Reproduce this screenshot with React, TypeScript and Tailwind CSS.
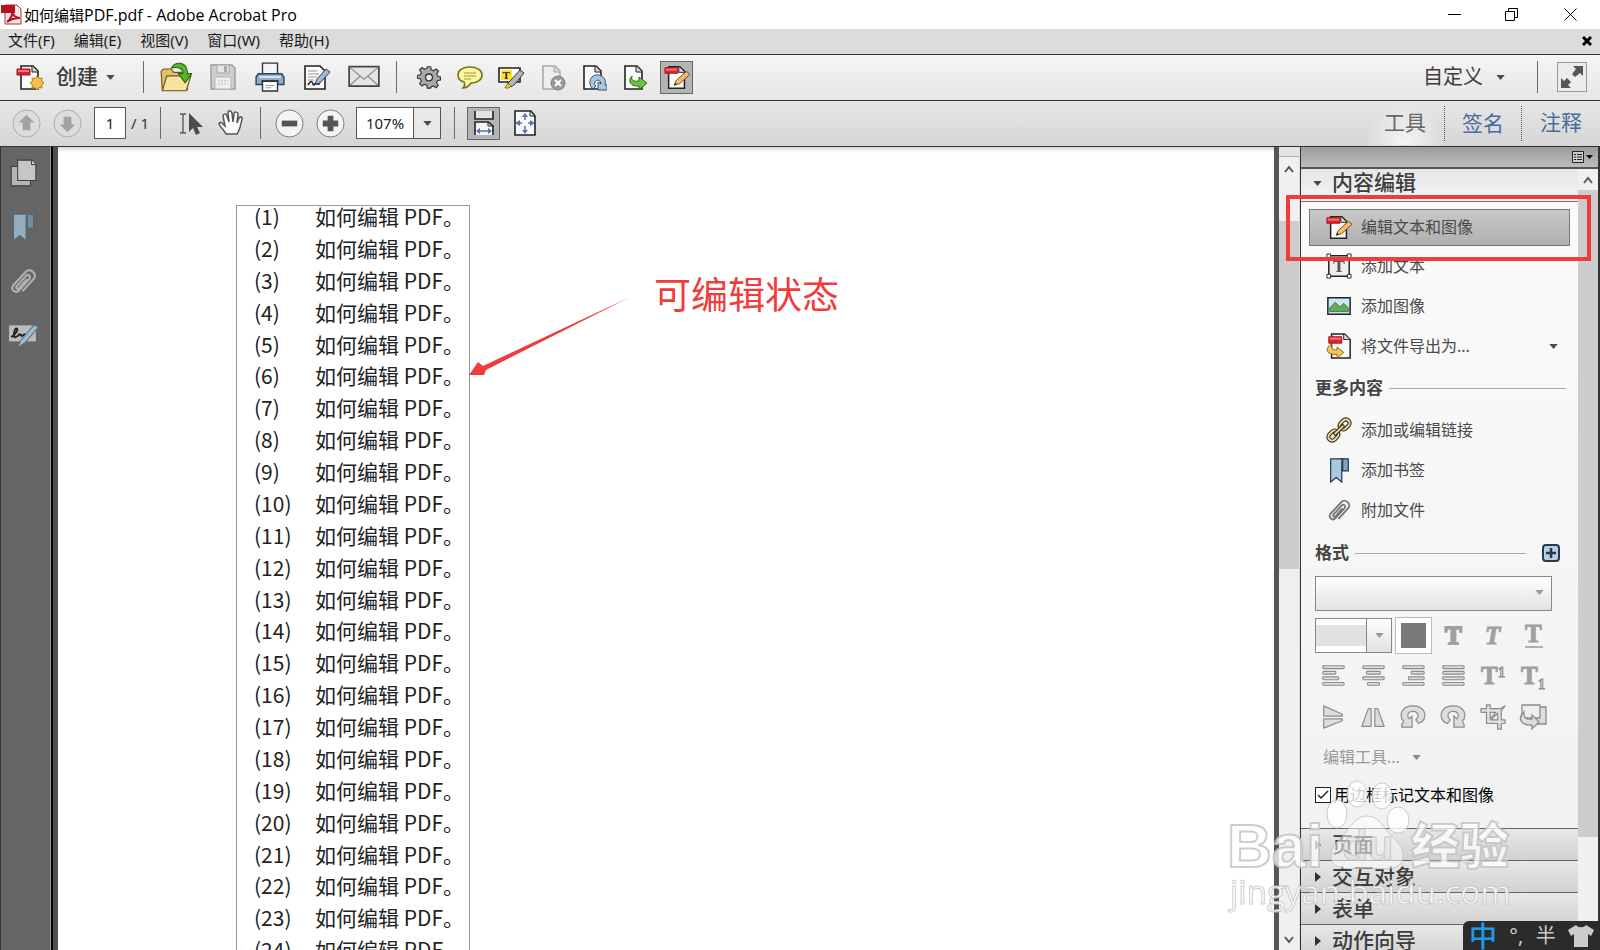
import React from "react";

type IconProps = { size?: number; children: React.ReactNode };

const Icon = ({ size = 28, children }: IconProps) => (
  <svg width={size} height={size} viewBox="0 0 28 28" fill="none" className="shrink-0" aria-hidden="true">
    {children}
  </svg>
);

const Caret = ({ className = "text-[#4a4a4a]" }: { className?: string }) => (
  <svg width="9" height="5" viewBox="0 0 10 6" className={`shrink-0 ${className}`} aria-hidden="true">
    <path d="M0 0h10L5 6z" fill="currentColor" />
  </svg>
);

const Chevron = ({ down = false }: { down?: boolean }) => (
  <svg width="10" height="8" viewBox="0 0 10 8" fill="none" aria-hidden="true">
    <path d={down ? "M1 1l4 5 4-5" : "M1 7l4-5 4 5"} stroke="#555" strokeWidth="2" />
  </svg>
);

const Separator = () => <span className="h-8 w-px shrink-0 bg-[#6b6b6b]" />;

/* ---------- toolbar icons ---------- */

const Page = ({ stroke = "#222", fill = "#fafafa" }: { stroke?: string; fill?: string }) => (
  <>
    <path d="M5 3h12l5 5v18H5z" fill={fill} stroke={stroke} strokeWidth="1.6" />
    <path d="M16 3v6h6" fill="#d8d8d8" stroke={stroke} strokeWidth="1" />
  </>
);

const CreateIcon = () => (
  <Icon>
    <Page />
    <path d="M1 6h13v6H1z" fill="#e2202c" stroke="#a5121c" />
    <path d="M2 7h11v2H2z" fill="#f27a80" />
    <path
      d="M21 13l2 2.500 3-.5-.5 3 2.500 2-2.500 2 .5 3-3-.5-2 2.500-2-2.500-3 .5.500-3-2.500-2 2.500-2-.5-3 3 .5z"
      fill="#f5c04e"
      stroke="#b97c14"
    />
  </Icon>
);

const FolderIcon = () => (
  <Icon size={32}>
    <path d="M1 9l2-2h7l2 3h12v15H2z" fill="#e0c268" stroke="#6d5719" />
    <path d="M2 26l4-13h21l-4 13z" fill="#f6e3a0" stroke="#6d5719" />
    <path d="M10 6c3-6 14-6 14 5h4l-6 8-6-8h4c0-5-4-6-10-5z" fill="#55b82a" stroke="#2a6a10" />
  </Icon>
);

const SaveIcon = () => (
  <Icon>
    <path d="M2 2h21l3 3v21H2z" fill="#cecece" stroke="#9c9c9c" strokeWidth="1.400" />
    <path d="M8 2h12v8H8z" fill="#e6e6e6" stroke="#a5a5a5" />
    <path d="M15 3h3v6h-3z" fill="#aaa" />
    <path d="M6 14h16v12H6z" fill="#f0f0f0" stroke="#b5b5b5" />
    <path d="M9 18h10M9 21h10" stroke="#bbb" strokeDasharray="2 1" />
  </Icon>
);

const PrintIcon = () => (
  <Icon size={30}>
    <path d="M7 1h14v11H7z" fill="#f4f5fa" stroke="#333" strokeWidth="1.300" />
    <path d="M3 11h22l2 3v7H1v-7z" fill="#8eacc6" stroke="#2d4458" strokeWidth="1.300" />
    <path d="M4 14h20" stroke="#d6e5f1" strokeWidth="2" />
    <path d="M6 17h16v2H6z" fill="#27323c" />
    <path d="M7 18h14v9H7z" fill="#fff" stroke="#333" strokeWidth="1.300" />
    <path d="M10 22h8M10 24h5" stroke="#999" />
  </Icon>
);

const SignDocIcon = () => (
  <Icon>
    <path d="M2 3h15l5 5v18H2z" fill="#fafafa" stroke="#222" strokeWidth="1.600" />
    <path d="M5 8h9M5 11h11M5 14h9M5 17h6" stroke="#999" />
    <path d="M5 22c3-5 4-4 5-1s2-2 3 0h4" stroke="#222" strokeWidth="1.500" />
    <path d="M12 21l2-5 9-10 4 3-10 11z" fill="#9db9d3" stroke="#2d4458" />
  </Icon>
);

const MailIcon = () => (
  <Icon size={32}>
    <path d="M1 5h26v17H1z" fill="#e4e4e4" stroke="#444" strokeWidth="1.500" />
    <path d="M2 21l9-8M26 21l-9-8M2 6l12 10L26 6" stroke="#888" />
  </Icon>
);

const GearIcon = () => (
  <Icon size={24}>
    <path
      d="M12 2h4l.6 3.500 2.700 1.200 3-2 2.800 2.800-2 3 1.100 2.600L27.500 14v3.500l-3.500.6-1.200 2.600 2 3-2.700 2.800-3-2-2.600 1.100L16 27h-4l-.6-3.400-2.600-1.100-3 2L3 21.700l2-3L3.900 16 .5 15.500V12l3.400-.6L5 8.700l-2-3L5.800 3l3 2 2.600-1z"
      fill="#a8a8a8"
      stroke="#333"
      strokeWidth="1.300"
    />
    <circle cx="14" cy="14.500" r="4" fill="#eee" stroke="#333" strokeWidth="1.500" />
  </Icon>
);

const CommentIcon = () => (
  <Icon>
    <path
      d="M14 4c7 0 12 3 12 8s-5 8-11 8c-2 3-5 5-8 5 2-2 2-4 1-6-4-1-6-4-6-7 0-5 5-8 12-8z"
      fill="#fdf6a0"
      stroke="#7b7020"
      strokeWidth="1.600"
    />
    <path d="M8 10h12M8 13h12M8 16h7" stroke="#a3952c" />
  </Icon>
);

const HighlightIcon = () => (
  <Icon>
    <path d="M2 5h21v14H2z" fill="#fff" stroke="#222" strokeWidth="1.600" />
    <path d="M4 7h11v10H4z" fill="#fbe726" />
    <text x="5.500" y="16" fontSize="11" fontWeight="700" fill="#222" fontFamily="Liberation Serif">T</text>
    <path d="M10 21l4-4 9-10 4 3-9 11-4 3z" fill="#b5b5b5" stroke="#333" />
    <path d="M8 25l3-5 3 3-2 2z" fill="#e8cf1c" stroke="#8b7a12" />
  </Icon>
);

const DeleteDocIcon = () => (
  <Icon>
    <Page stroke="#aaa" fill="#eee" />
    <circle cx="20" cy="20" r="7" fill="#999" stroke="#808080" />
    <path d="M17 17l6 6M23 17l-6 6" stroke="#fff" strokeWidth="2" />
  </Icon>
);

const RefreshDocIcon = () => (
  <Icon>
    <Page />
    <path
      d="M14 26c-4-3-4-9-1-12 4-4 11-2 13 3 1 2 0 4 0 5h2v5h-9v-8l3 2c0-4-5-5-6-2-1 2 0 3 1 4z"
      fill="#a9c6de"
      stroke="#35526c"
    />
  </Icon>
);

const ExportDocIcon = () => (
  <Icon>
    <Page />
    <path d="M12 13c-1 4 1 6 7 5v-4l8 6-8 7v-4c-8 1-12-5-7-10z" fill="#6cc23c" stroke="#2a6a10" />
  </Icon>
);

const EditPdfIcon = () => (
  <Icon size={26}>
    <Page />
    <path d="M1 4h14v6H1z" fill="#e2202c" stroke="#a5121c" />
    <path d="M2 5h12v2H2z" fill="#f27a80" />
    <path d="M11 23l2-5L24 8l4 3-11 10z" fill="#f3bf6c" stroke="#6d4716" />
    <path d="M11 23l1-3 2 2z" fill="#333" />
  </Icon>
);

const FitWidthIcon = () => (
  <Icon>
    <path d="M5 2v8h18V2" fill="#e4e4e4" stroke="#222" strokeWidth="1.600" />
    <path d="M5 26V13h13l5 4v9" fill="#f4f4f4" stroke="#222" strokeWidth="1.600" />
    <path d="M18 13v4h5" stroke="#222" />
    <path d="M8 22h12" stroke="#5a71ad" strokeWidth="1.500" />
    <path d="M6 22l4-3v6zM22 22l-4-3v6z" fill="#5a71ad" />
  </Icon>
);

const FitPageIcon = () => (
  <Icon>
    <path d="M4 2h16l4 5v19H4z" fill="#f6f8fc" stroke="#222" strokeWidth="1.600" />
    <path d="M19 2v5h5" stroke="#222" />
    <path d="M14 7v4M14 17v4M8 14h3M17 14h3" stroke="#5a71ad" strokeWidth="1.500" />
    <path d="M14 4l3 4h-6zM14 25l3-4h-6zM4 14l5-3v6zM24 14l-5-3v6z" fill="#5a71ad" />
  </Icon>
);

const CircleButton = ({ label, dim = false, d }: { label: string; dim?: boolean; d: string }) => (
  <button aria-label={label} className="flex w-[41px] shrink-0 justify-center">
    <svg width="29" height="29" viewBox="0 0 30 30" aria-hidden="true">
      <circle cx="15" cy="15" r="14" fill={dim ? "#dcdcdc" : "#f4f4f4"} stroke={dim ? "#aaa" : "#777"} />
      <path d={d} fill={dim ? "#a2a2a2" : "#555"} />
    </svg>
  </button>
);

const SelectToolIcon = () => (
  <Icon>
    <path d="M3 5h2l1 1 1-1h2M6 6v17M3 24h2l1-1 1 1h2" stroke="#555" strokeWidth="1.300" />
    <path d="M12 4v19l4-4 3 7 4-2-3-6h6z" fill="#4c4c4c" />
  </Icon>
);

const HandIcon = () => (
  <Icon>
    <path
      d="M9 25c-2-4-5-6-7-10 0-2 3-2 4 0l2 2L6 7c0-2 3-3 4 0l2 6-1-9c0-3 3-3 4 0l1 9 1-8c0-3 4-2 4 0l-1 9 2-5c1-2 4-1 3 1-1 5-2 11-5 15z"
      fill="#fbfbfb"
      stroke="#555"
      strokeWidth="1.500"
    />
  </Icon>
);

/* ---------- shared by navigation pane and tool panel ---------- */

const Clip = ({ color, size = 28 }: { color: string; size?: number }) => (
  <Icon size={size}>
    <path
      d="M8 18l9-10c2-2 5 1 3 3L10 22c-3 3-8-1-5-5L16 5c4-5 12 1 8 6L14 22M8 18c-1 2 1 3 2 2l7-8"
      transform="translate(0 1)"
      stroke={color}
      strokeWidth="2"
      strokeLinecap="round"
    />
  </Icon>
);

type RibbonProps = { stroke: string; fill: string; back: string; size?: number };

const Ribbon = ({ stroke, fill, back, size = 28 }: RibbonProps) => (
  <Icon size={size}>
    <path d="M15 2h9v13h-6V4z" fill={back} stroke={stroke} strokeWidth="1.300" />
    <path d="M5 2h14c-2 0-2 2-2 4v21l-6-5-6 5z" fill={fill} stroke={stroke} strokeWidth="1.300" />
  </Icon>
);

const PagesIcon = () => (
  <Icon size={30}>
    <path d="M3 8h18v18H3z" fill="#b5b5b5" stroke="#3f3f3f" />
    <path d="M9 2h13l4 4v15H9z" fill="#c6c6c6" stroke="#3f3f3f" />
    <path d="M22 2v4h4" stroke="#3f3f3f" fill="#ddd" />
  </Icon>
);

const SignaturesIcon = () => (
  <Icon size={30}>
    <path d="M1 5h25v15H1z" fill="#bcbcbc" />
    <path d="M3 16c5-3 7-8 5-8s-4 9-1 8 4-4 5-2 2 0 4-1" stroke="#222" strokeWidth="1.800" />
    <path d="M9 26l3-7L24 5l5 1-13 15z" fill="#a3bccd" stroke="#5a6f80" />
  </Icon>
);

const AddTextIcon = () => (
  <Icon size={26}>
    <path d="M3 3h22v22H3z" fill="#efefef" stroke="#222" strokeWidth="1.600" />
    <text x="7.500" y="20" fontSize="19" fontWeight="700" fill="#555" fontFamily="Liberation Serif">T</text>
    <path d="M1 1h4v4H1zM23 1h4v4h-4zM1 23h4v4H1zM23 23h4v4h-4z" fill="#fff" stroke="#222" />
  </Icon>
);

const AddImageIcon = () => (
  <Icon size={26}>
    <path d="M2 5h24v18H2z" fill="#cfe6f5" stroke="#222" strokeWidth="1.600" />
    <path d="M4 20v-4l6-6 5 5 4-4 5 5v4z" fill="#64a95c" stroke="#3f7d3a" />
  </Icon>
);

const ExportAsIcon = () => (
  <Icon size={26}>
    <path d="M6 1h14l6 6v20H6z" fill="#fafafa" stroke="#222" strokeWidth="1.600" />
    <path d="M19 1v6h7" fill="#d8d8d8" stroke="#222" />
    <path d="M3 4h14v7H3z" fill="#e2202c" stroke="#a5121c" />
    <path d="M4 5h12v2H4z" fill="#f27a80" />
    <path d="M6 12c-8 4-6 12 6 11v4l7-6-7-6v3c-5 1-7-2-6-6z" fill="#f5c65c" stroke="#8a5d10" />
  </Icon>
);

const LinkIcon = () => (
  <Icon size={26}>
    {[["8", "20"], ["20", "8"]].map(([cx, cy]) => (
      <g key={cx} transform={`rotate(-45 ${cx} ${cy})`}>
        <rect x={Number(cx) - 6} y={Number(cy) - 4} width="12" height="8" rx="4" stroke="#3d2f14" strokeWidth="4.500" />
        <rect x={Number(cx) - 6} y={Number(cy) - 4} width="12" height="8" rx="4" stroke="#eadbb4" strokeWidth="2" />
      </g>
    ))}
    <path d="M10 18l8-8" stroke="#3d2f14" strokeWidth="4.500" strokeLinecap="round" />
    <path d="M10 18l8-8" stroke="#eadbb4" strokeWidth="2" strokeLinecap="round" />
  </Icon>
);

/* ---------- format section glyphs ---------- */

const FormatT = ({ variant }: { variant: "bold" | "italic" | "underline" | "sup" | "sub" }) => {
  const script = variant === "sup" || variant === "sub";
  return (
    <Icon size={28}>
      <text
        x={script ? 2 : 5}
        y={variant === "underline" ? 20 : 22}
        fontSize="25"
        fontWeight="700"
        fontStyle={variant === "italic" ? "italic" : "normal"}
        fill="#a0a0a0"
        stroke="#a0a0a0"
        strokeWidth={variant === "bold" ? 2 : 1}
        fontFamily="Liberation Serif"
      >
        T
      </text>
      {variant === "underline" && <path d="M5 25h18" stroke="#989898" strokeWidth="1.500" />}
      {script && (
        <text
          x="19"
          y={variant === "sup" ? 15 : 27}
          fontSize="14"
          fontWeight="700"
          fill="#ddd"
          stroke="#8c8c8c"
          fontFamily="Liberation Serif"
        >
          1
        </text>
      )}
    </Icon>
  );
};

const AlignIcon = ({ rows }: { rows: number[][] }) => (
  <Icon size={26}>
    {rows.map(([x, w], i) => (
      <rect key={i} x={x + 1} y={3 + i * 6} width={w - 1} height="3" rx="1" fill="#ddd" stroke="#8c8c8c" strokeWidth="1.200" />
    ))}
  </Icon>
);

const Shape = ({ d }: { d: string }) => (
  <Icon size={26}>
    <path d={d} fill="#ddd" stroke="#8c8c8c" strokeWidth="1.300" strokeLinejoin="round" />
  </Icon>
);

const ROTATE = "M4 19c-6-7-2-17 10-17s16 10 10 17l-4 2-3-4c4-3 3-9-3-9s-7 5-4 8l3-3v12H2v-3z";

const formatRows: { label: string; icon: React.ReactNode }[][] = [
  [
    { label: "左对齐", icon: <AlignIcon rows={[[2, 24], [2, 15], [2, 18], [2, 24]]} /> },
    { label: "居中", icon: <AlignIcon rows={[[2, 24], [6, 16], [2, 24], [7, 14]]} /> },
    { label: "右对齐", icon: <AlignIcon rows={[[2, 24], [11, 15], [8, 18], [2, 24]]} /> },
    { label: "两端对齐", icon: <AlignIcon rows={[[2, 24], [2, 24], [2, 24], [2, 24]]} /> },
    { label: "上标", icon: <FormatT variant="sup" /> },
    { label: "下标", icon: <FormatT variant="sub" /> },
  ],
  [
    { label: "垂直翻转", icon: <Shape d="M4 2l20 9v2H4zM4 16h20v2L4 26z" /> },
    { label: "水平翻转", icon: <Shape d="M12 5v19H2L9 5zM16 5v19h10L19 5z" /> },
    { label: "逆时针旋转", icon: <Shape d={ROTATE} /> },
    {
      label: "顺时针旋转",
      icon: (
        <Icon size={26}>
          <path d={ROTATE} transform="matrix(-1 0 0 1 28 0)" fill="#ddd" stroke="#8c8c8c" strokeWidth="1.300" />
        </Icon>
      ),
    },
    { label: "裁剪", icon: <Shape d="M7 1v4H1v4h6v12h12v6h4v-6h4v-4h-4V7l4-5-5 3H11V1zM11 9h6l-6 7zM19 10v7h-7z" /> },
    {
      label: "替换图像",
      icon: (
        <Icon size={28}>
          <path d="M8 4h19v17H8z" fill="#ddd" stroke="#8c8c8c" strokeWidth="1.300" />
          <path d="M3 2h18v13H3z" fill="#eee" stroke="#8c8c8c" strokeWidth="1.300" />
          <path d="M5 9c-7 6-3 14 8 13v4l7-7-7-7v4c-6 1-9-2-8-7z" fill="#ddd" stroke="#8c8c8c" strokeWidth="1.300" />
        </Icon>
      ),
    },
  ],
];

const menuItems = ["文件(F)", "编辑(E)", "视图(V)", "窗口(W)", "帮助(H)"];

const fileTools = [
  { label: "打开", icon: <FolderIcon /> },
  { label: "保存", icon: <SaveIcon /> },
  { label: "打印", icon: <PrintIcon /> },
  { label: "签署", icon: <SignDocIcon /> },
  { label: "电子邮件", icon: <MailIcon /> },
];

const quickTools = [
  { label: "首选项", icon: <GearIcon /> },
  { label: "添加附注", icon: <CommentIcon /> },
  { label: "高亮文本", icon: <HighlightIcon /> },
  { label: "删除页面", icon: <DeleteDocIcon /> },
  { label: "旋转页面", icon: <RefreshDocIcon /> },
  { label: "导出页面", icon: <ExportDocIcon /> },
];

const editItems = [
  { label: "添加文本", icon: <AddTextIcon /> },
  { label: "添加图像", icon: <AddImageIcon /> },
  { label: "将文件导出为...", icon: <ExportAsIcon />, menu: true },
];

const moreItems = [
  { label: "添加或编辑链接", icon: <LinkIcon /> },
  { label: "添加书签", icon: <Ribbon stroke="#26384a" fill="#a9c9e2" back="#7fa3c0" size={26} /> },
  { label: "附加文件", icon: <Clip color="#777" size={26} /> },
];

const sections = ["页面", "交互对象", "表单", "动作向导"];

const lines = Array.from({ length: 24 }, (_, i) => i + 1);

const TitleBar = () => (
  <header className="flex h-[29px] shrink-0 items-center bg-white pl-px text-black">
    <svg width="21" height="21" viewBox="0 0 21 21" className="shrink-0" aria-hidden="true">
      <path d="M4 1h12l4 4v15H4z" fill="#f3e9e9" stroke="#a33" />
      <path d="M0 1h14v8H0z" fill="#b3141d" />
      <path d="M6 18c4-3 6-8 5-11 1 5 4 7 8 7-5 0-9 1-13 4z" fill="none" stroke="#b3141d" strokeWidth="2" />
    </svg>
    <h1 className="ml-0.5 flex-1 font-['Open_Sans','Noto_Sans_CJK_SC',sans-serif] text-[15px]">
      如何编辑<span className="text-[16px]">PDF.pdf - Adobe Acrobat Pro</span>
    </h1>
    <div className="flex items-center">
      <button aria-label="最小化" className="flex w-[57px] justify-center">
        <svg width="13" height="13" viewBox="0 0 13 13"><path d="M0 6.500h13" stroke="#000" /></svg>
      </button>
      <button aria-label="还原" className="flex w-[57px] justify-center">
        <svg width="13" height="13" viewBox="0 0 13 13" fill="none" stroke="#000">
          <path d="M.5 3.500h9v9h-9zM3.500 3.500v-3h9v9h-3" />
        </svg>
      </button>
      <button aria-label="关闭" className="flex w-[60px] justify-center">
        <svg width="13" height="13" viewBox="0 0 13 13"><path d="M.5.500l12 12M12.500.500l-12 12" stroke="#000" /></svg>
      </button>
    </div>
  </header>
);

const MenuBar = () => (
  <nav className="flex h-[25px] shrink-0 items-center gap-[19px] bg-[#dcdcdc] pr-2 pb-0.5 pl-2 text-[15px] text-[#1a1a1a]">
    {menuItems.map((item) => (
      <button key={item}>{item}</button>
    ))}
    <button aria-label="关闭文档" className="ml-auto">
      <svg width="10" height="10" viewBox="0 0 10 10"><path d="M1 1l8 8M9 1L1 9" stroke="#000" strokeWidth="3" /></svg>
    </button>
  </nav>
);

const MainToolbar = () => (
  <div className="flex h-[46px] shrink-0 items-center border-t border-[#333] bg-linear-to-b from-[#f5f5f5] to-[#e6e6e6] pr-[13px] pb-px pl-4">
    <button className="flex w-[127px] items-center text-[21px] font-medium text-[#3d3d3d]">
      <CreateIcon />
      <span className="mr-2 ml-3">创建</span>
      <Caret />
    </button>
    <Separator />
    <div className="ml-2 flex">
      {fileTools.map(({ label, icon }) => (
        <button key={label} aria-label={label} className="flex w-[47px] items-center justify-center">{icon}</button>
      ))}
    </div>
    <span className="w-[9px]" />
    <Separator />
    <div className="ml-[11px] flex items-center">
      {quickTools.map(({ label, icon }) => (
        <button key={label} aria-label={label} className="flex w-[41px] items-center justify-center">{icon}</button>
      ))}
      <button
        aria-label="编辑文本和图像"
        aria-pressed="true"
        className="ml-1.5 flex size-[33px] items-center justify-center border border-[#666] bg-[#b4b4b4]"
      >
        <EditPdfIcon />
      </button>
    </div>
    <button className="ml-auto flex items-center gap-[13px] text-[20px] text-[#3d3d3d]">
      自定义
      <Caret />
    </button>
    <span className="w-8" />
    <Separator />
    <button aria-label="阅读模式" className="ml-[19px] flex size-[30px] items-center justify-center border border-[#999] bg-[#ececec]">
      <svg width="24" height="24" viewBox="0 0 24 24" fill="#555" aria-hidden="true">
        <path d="M23 1v10l-3-3-5 4-3-3 4-5-3-3zM1 23V13l3 3 3-3 4 4-3 3 3 3z" />
      </svg>
    </button>
  </div>
);

const NavToolbar = () => (
  <div className="flex h-[47px] shrink-0 items-center border-y border-[#333] bg-linear-to-b from-[#e6e6e6] to-[#d6d6d6] pb-px pl-1.5">
    <CircleButton label="上一页" dim d="M15 6l8 8h-4v8h-8v-8H7z" />
    <CircleButton label="下一页" dim d="M15 24l8-8h-4V8h-8v8H7z" />
    <input
      aria-label="页码"
      defaultValue="1"
      className="ml-1.5 h-8 w-8 border border-[#555] bg-white text-center text-[15px] text-[#222]"
    />
    <span className="ml-[5px] w-[29px] text-[15px] whitespace-nowrap text-[#333]">/ 1</span>
    <Separator />
    <button aria-label="选择工具" className="ml-2.5 flex w-10 justify-center"><SelectToolIcon /></button>
    <button aria-label="手形工具" className="flex w-10 justify-center"><HandIcon /></button>
    <span className="w-[9px]" />
    <Separator />
    <span className="w-2" />
    <CircleButton label="缩小" d="M7 12h16v6H7z" />
    <CircleButton label="放大" d="M12 7h6v5h5v6h-5v5h-6v-5H7v-6h5z" />
    <div className="ml-[5px] flex h-8 w-[85px] shrink-0 border border-[#555] bg-white">
      <input aria-label="缩放比例" defaultValue="107%" className="w-14 text-center text-[15px] text-[#222]" />
      <button aria-label="选择缩放比例" className="flex flex-1 items-center justify-center border-l border-[#555] bg-[#e8e8e8]">
        <Caret />
      </button>
    </div>
    <span className="w-[13px]" />
    <Separator />
    <button
      aria-label="适合宽度"
      aria-pressed="true"
      className="ml-3 flex size-[33px] items-center justify-center border border-[#666] bg-[#b4b4b4]"
    >
      <FitWidthIcon />
    </button>
    <button aria-label="适合页面" className="ml-[5px] flex w-10 justify-center"><FitPageIcon /></button>
    <div className="ml-auto flex h-full items-center text-[21px] text-[#4a6c9c]">
      <button className="flex h-full items-center bg-[radial-gradient(circle_at_50%_100%,#f6f6f6,transparent_70%)] px-[18px] text-[#666]">
        工具
      </button>
      <button className="h-[35px] border-x border-dotted border-[#555] px-[17px] leading-8">签名</button>
      <button className="pr-[18px] pl-[18px]">注释</button>
    </div>
  </div>
);

const NavPane = () => (
  <nav className="flex w-[51px] shrink-0 flex-col items-center border-r border-l border-r-[#999] border-l-[#333] bg-[#656565] pt-[11px]">
    <div className="flex w-full flex-col gap-6 pl-[7px]">
      <button aria-label="页面缩略图" className="h-[30px] w-[30px]"><PagesIcon /></button>
      <button aria-label="书签" className="h-[30px] w-[30px]">
        <Ribbon stroke="#5a6670" fill="#94afc1" back="#6f8da3" size={30} />
      </button>
      <button aria-label="附件" className="h-[30px] w-[30px]"><Clip color="#b0b0b0" size={30} /></button>
      <button aria-label="签名" className="h-[30px] w-[30px]"><SignaturesIcon /></button>
    </div>
  </nav>
);

const DocumentView = () => (
  <main className="relative min-w-0 flex-1 overflow-hidden bg-white pt-[58px] pl-[178px] shadow-[inset_0_4px_4px_-2px_#ccc]">
    <ol className="grid h-[767px] w-[234px] auto-rows-fr border border-[#999] pl-[17px] font-['Noto_Sans_CJK_SC',sans-serif] text-[21px] leading-5 text-[#222]">
      {lines.map((n) => (
        <li key={n} className="flex">
          <span className="w-[61px]">({n})</span>
          <span className="whitespace-nowrap">如何编辑 PDF。</span>
        </li>
      ))}
    </ol>

    {/* Callout */}
    <svg width="162" height="80" viewBox="0 0 162 80" className="absolute top-[149px] left-[411px]" aria-hidden="true">
      <path d="M0 79l9-13 5 4L161 1 17 74l-2 5z" fill="#f03c3c" />
    </svg>
    <p className="absolute top-[120px] left-[596px] text-[37px] leading-14 text-[#f03c3c]">可编辑状态</p>
  </main>
);

const DocumentScrollbar = () => (
  <div className="flex w-[21px] shrink-0 flex-col items-center border-r border-[#ddd] bg-[#f0f0f0]">
    <span className="h-[10px] w-full border-b border-[#aaa] bg-[#e4e4e4]" />
    <button aria-label="向上滚动" className="flex h-6 items-center"><Chevron /></button>
    <span className="mt-10 h-[348px] w-full bg-[#cdcdcd]" />
    <button aria-label="向下滚动" className="mt-auto flex h-5 items-center"><Chevron down /></button>
  </div>
);

const PanelItem = ({ label, icon, menu }: { label: string; icon: React.ReactNode; menu?: boolean }) => (
  <button className="flex h-10 w-full items-center gap-[9px] pr-3 pl-[17px] text-left">
    {icon}
    {label}
    {menu && <span className="ml-auto"><Caret /></span>}
  </button>
);

const FormatSection = () => (
  <div className="pl-[14px]">
    <div className="flex h-[46px] items-center gap-1.5">
      <h3 className="text-[17px] font-bold text-[#444]">格式</h3>
      <span className="h-px w-[171px] bg-[#aaa]" />
      <button aria-label="展开格式" className="ml-2.5 flex size-[18px] items-center justify-center rounded-sm border-2 border-[#26384a] bg-[#b4cfe6]">
        <svg width="10" height="10" viewBox="0 0 10 10"><path d="M5 0v10M0 5h10" stroke="#26384a" strokeWidth="2.500" /></svg>
      </button>
    </div>
    <div className="relative w-[237px]">
      <select
        aria-label="字体"
        disabled
        className="block h-[35px] w-full appearance-none border border-[#888] bg-linear-to-b from-white to-[#e2e2e2]"
      />
      <Caret className="pointer-events-none absolute top-3.5 right-2 text-[#999]" />
    </div>
    <div className="mt-[7px] flex h-[35px] items-center">
      <div className="flex h-full w-[77px] border border-[#888] bg-white">
        <input aria-label="字号" disabled className="my-1.5 w-[50px] bg-[#e2e2e2]" />
        <button aria-label="选择字号" className="flex flex-1 items-center justify-center border-l border-[#888] bg-linear-to-b from-white to-[#e2e2e2]">
          <Caret className="text-[#999]" />
        </button>
      </div>
      <button aria-label="颜色" className="ml-[3px] flex size-[37px] items-center justify-center border border-[#bbb] bg-white">
        <span className="size-[25px] bg-[#7a7a7a]" />
      </button>
      <div className="ml-0.5 flex">
        <button aria-label="粗体" className="flex w-10 justify-center"><FormatT variant="bold" /></button>
        <button aria-label="斜体" className="flex w-10 justify-center"><FormatT variant="italic" /></button>
        <button aria-label="下划线" className="flex w-10 justify-center"><FormatT variant="underline" /></button>
      </div>
    </div>
    <div className="-ml-0.5 w-60 pt-0.5">
      {formatRows.map((row, i) => (
        <div key={i} className="flex h-[41px]">
          {row.map(({ label, icon }) => (
            <button key={label} aria-label={label} className="flex w-10 items-center justify-center">{icon}</button>
          ))}
        </div>
      ))}
    </div>
    <button className="flex h-10 items-center gap-3 pl-2 text-[#999]">
      编辑工具...
      <Caret className="text-[#888]" />
    </button>
    <label className="flex h-[35px] items-center gap-[3px] text-black">
      <input type="checkbox" defaultChecked className="peer sr-only" />
      <span className="flex size-4 items-center justify-center border border-[#222] bg-white peer-checked:[&>svg]:visible">
        <svg width="12" height="10" viewBox="0 0 12 10" fill="none" className="invisible" aria-hidden="true">
          <path d="M1 5l3 3 7-7" stroke="#222" strokeWidth="1.500" />
        </svg>
      </span>
      用边框标记文本和图像
    </label>
  </div>
);

const ToolPanel = () => (
  <aside className="relative flex w-[300px] shrink-0 flex-col border-r-2 border-l border-[#333] bg-[#f6f6f6] text-[16px] text-[#4a4a4a]">
    <div className="flex h-[22px] shrink-0 items-center justify-end border-b-2 border-[#555] bg-linear-to-b from-[#9b9b9b] to-[#bdbdbd] pr-[5px]">
      <button aria-label="面板选项" className="flex items-center gap-0.5">
        <svg width="12" height="12" viewBox="0 0 12 12" fill="none" aria-hidden="true">
          <path d="M.5.500h11v11H.5z" stroke="#222" fill="#ccc" />
          <path d="M2 3.500h2M5 3.500h5M2 6h2M5 6h5M2 8.500h2M5 8.500h5" stroke="#222" />
        </svg>
        <svg width="7" height="4" viewBox="0 0 7 4" aria-hidden="true"><path d="M0 0h7L3.500 4z" fill="#111" /></svg>
      </button>
    </div>
    <div className="flex min-h-0 flex-1">
      <div className="min-w-0 flex-1 overflow-hidden bg-linear-to-b from-[#fbfbfb] to-[#f0f0f0]">
        <button className="flex h-[33px] w-full items-center gap-2.5 border-b border-[#777] bg-linear-to-b from-[#e6e6e6] to-[#f4f4f4] pb-1 pl-3 text-[21px] font-medium text-[#3d3d3d]">
          <Caret />
          内容编辑
        </button>
        <div className="pt-[7px] pr-2 pl-2">
          <button className="flex h-[37px] w-full items-center gap-[9px] border border-[#777] bg-linear-to-b from-[#c8c8c8] to-[#b0b0b0] pb-0.5 pl-4">
            <EditPdfIcon />
            编辑文本和图像
          </button>
          {editItems.map((item) => (
            <PanelItem key={item.label} {...item} />
          ))}
        </div>
        <div className="flex h-11 items-center gap-1.5 pr-3 pl-[14px]">
          <h3 className="text-[17px] font-bold text-[#444]">更多内容</h3>
          <span className="h-px flex-1 bg-[#aaa]" />
        </div>
        <div className="px-2">
          {moreItems.map((item) => (
            <PanelItem key={item.label} {...item} />
          ))}
        </div>
        <FormatSection />
        <div className="mt-4">
          {sections.map((name) => (
            <button
              key={name}
              className="flex h-[32px] w-full items-center gap-[11px] border-t border-[#666] bg-linear-to-b from-[#e8e8e8] to-[#d2d2d2] pl-[14px] text-[21px] font-medium text-[#3d3d3d]"
            >
              <svg width="6" height="10" viewBox="0 0 6 10" aria-hidden="true"><path d="M0 0v10l6-5z" fill="#333" /></svg>
              {name}
            </button>
          ))}
        </div>
      </div>
      <div className="flex w-5 shrink-0 flex-col items-center bg-[#f0f0f0]">
        <button aria-label="向上滚动" className="flex h-[21px] items-center"><Chevron /></button>
        <span className="h-[647px] w-full bg-[#cdcdcd]" />
      </div>
    </div>

    <span className="pointer-events-none absolute top-[48px] right-[7px] -left-[15px] h-[66px] border-4 border-[#f03c3c]" />
  </aside>
);

const Watermark = () => (
  <svg
    width="300"
    height="150"
    viewBox="0 0 300 150"
    className="pointer-events-none absolute right-[80px] bottom-5"
    fill="#fff"
    fillOpacity="0.75"
    stroke="#c0c0c0"
    strokeOpacity="0.8"
  >
    <text x="7" y="87" fontSize="62" fontWeight="700" fontFamily="Liberation Sans" strokeWidth="2">Bai</text>
    <g fillOpacity="0.8">
      <ellipse cx="117" cy="34" rx="10" ry="14" />
      <ellipse cx="137" cy="14" rx="10" ry="13" />
      <ellipse cx="162" cy="16" rx="10" ry="13" />
      <ellipse cx="178" cy="40" rx="11" ry="13" />
      <path
        d="M147 36c12 0 16 11 24 20 8 7 12 12 12 19 0 16-16 14-36 13-20 1-36 3-36-13 0-7 4-12 12-19 8-9 12-20 24-20z"
        fillOpacity="0.5"
      />
    </g>
    <text x="122" y="80" fontSize="42" fontWeight="700" fontFamily="Liberation Sans" fill="#ccc" fillOpacity="0.2">du</text>
    <text x="191" y="84" fontSize="49" fontWeight="900" fontFamily="Noto Sans CJK SC" strokeWidth="2">经验</text>
    <text x="10" y="124" fontSize="33" fontFamily="Open Sans" fillOpacity="0.9">jingyan.baidu.com</text>
  </svg>
);

const ImeBar = () => (
  <div className="absolute right-0 bottom-0 flex h-[29px] w-[137px] items-center justify-between rounded-tl-md bg-[#2b2b2b] pr-1.5 pl-1.5 text-[20px] leading-7 text-[#ccc]">
    <span className="text-[28px] font-medium text-[#1e9be8]">中</span>
    <span>°,</span>
    <span>半</span>
    <svg width="26" height="22" viewBox="0 0 26 22" fill="#ccc" aria-hidden="true">
      <path d="M8 0c2 3 8 3 10 0l8 5-3 6-3-2v13H6V9l-3 2-3-6z" />
    </svg>
  </div>
);

const App = () => (
  <div className="relative flex h-screen flex-col overflow-hidden font-['Noto_Sans','Noto_Sans_CJK_SC',sans-serif]">
    <TitleBar />
    <MenuBar />
    <MainToolbar />
    <NavToolbar />
    <div className="flex min-h-0 flex-1">
      <NavPane />
      <span className="w-[7px] shrink-0 border-l-2 border-black bg-[#505050]" />
      <DocumentView />
      <span className="w-[5px] shrink-0 bg-[#555]" />
      <DocumentScrollbar />
      <ToolPanel />
    </div>
    <Watermark />
    <ImeBar />
  </div>
);

export default App;
